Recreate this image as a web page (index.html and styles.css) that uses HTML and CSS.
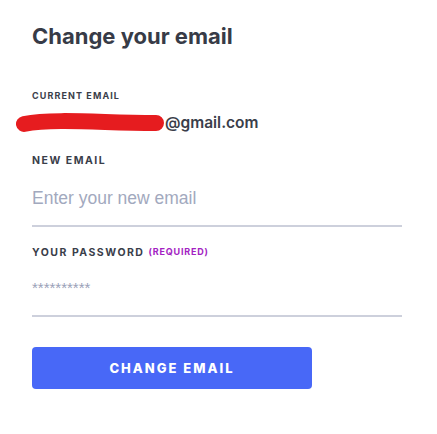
FILE: index.html
```html
<!DOCTYPE html>
<html>
<head>
<meta charset="utf-8">
<link rel="stylesheet" href="styles.css">
</head>
<body>
<main class="page">
  <h1 class="title">Change your email</h1>
  <section class="current">
    <div class="label-sm">CURRENT EMAIL</div>
    <div class="current-value">
      <svg class="scribble" width="150" height="20" viewBox="0 0 150 20"><path d="M9 11 C 30 7, 60 8, 90 9 S 130 10, 141 10" stroke="#e61c1f" stroke-width="16" stroke-linecap="round" fill="none"/></svg><span>@gmail.com</span>
    </div>
  </section>
  <section class="field field-new">
    <label class="label">NEW EMAIL</label>
    <div class="input input-lg">Enter your new email</div>
  </section>
  <section class="field field-pass">
    <label class="label">YOUR PASSWORD <span class="req">(REQUIRED)</span></label>
    <div class="input input-sm">**********</div>
  </section>
  <button class="btn">CHANGE EMAIL</button>
</main>
</body>
</html>
```
FILE: styles.css
```css
* { box-sizing: border-box; }
html, body { margin: 0; background: #fff; }
.page {
  padding: 21px 35px 0 32px;
  font-family: Inter, "Liberation Sans", sans-serif;
  color: #3a3e4a;
  display: flex;
  flex-direction: column;
}
.title {
  margin: 0;
  font-size: 22px;
  font-weight: 700;
  line-height: 30px;
  color: #373b47;
}
.current { margin-top: 40px; }
.label-sm {
  font-size: 9px;
  font-weight: 700;
  letter-spacing: 1.1px;
  line-height: 10px;
}
.current-value {
  margin-top: 12px;
  display: flex;
  align-items: center;
  font-size: 15.5px;
  font-weight: 600;
  line-height: 20px;
}
.scribble { margin-left: -17px; display: block; flex: none; }
.field { display: flex; flex-direction: column; }
.field-new { margin-top: 22px; }
.label {
  font-size: 10.5px;
  font-weight: 700;
  letter-spacing: 1.5px;
  line-height: 12px;
}
.req {
  font-size: 9px;
  color: #a322c2;
  letter-spacing: 0.8px;
  vertical-align: 1px;
}
.input {
  border-bottom: 2px solid #cdd0dc;
  color: #a2a9be;
}
.input-lg {
  margin-top: 20px;
  font-family: "Liberation Sans", Arial, sans-serif;
  font-size: 17.5px;
  line-height: 22px;
  padding-bottom: 16px;
}
.field-pass { margin-top: 19px; }
.input-sm {
  margin-top: 22px;
  font-family: "Liberation Sans", Arial, sans-serif;
  font-size: 15px;
  line-height: 14px;
  padding-bottom: 20px;
  color: #9aa1b8;
}
.btn {
  margin-top: 30px;
  width: 280px;
  height: 42px;
  border: 0;
  border-radius: 4px;
  background: #4868f7;
  color: #fff;
  font-family: Inter, "Liberation Sans", sans-serif;
  font-size: 13px;
  font-weight: 800;
  letter-spacing: 2px;
}
```
